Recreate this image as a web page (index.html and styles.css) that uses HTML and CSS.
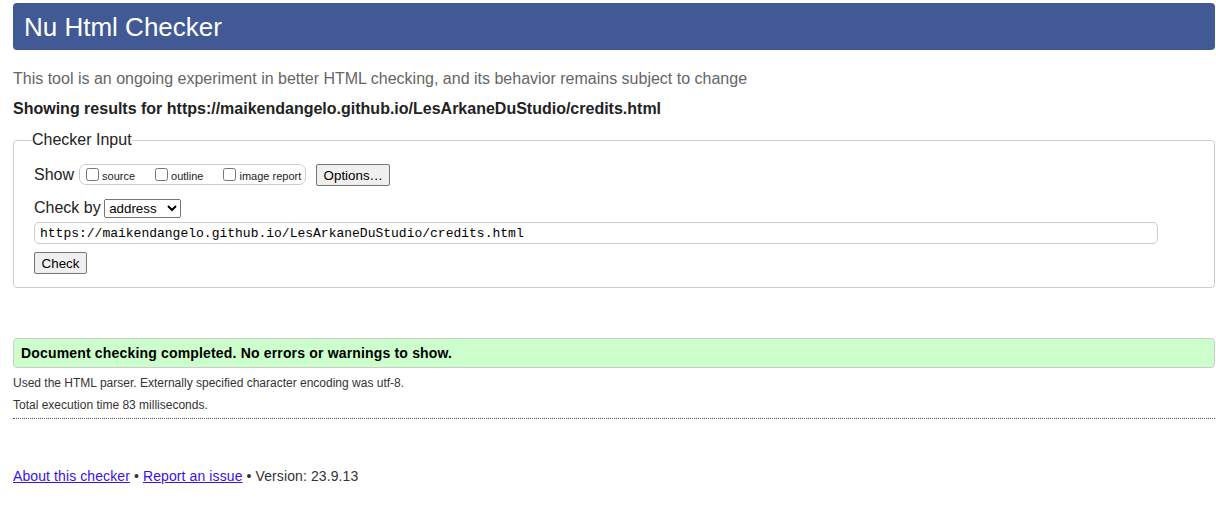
FILE: index.html
```html
<!DOCTYPE html>
<html lang="en">
<head>
<meta charset="utf-8">
<title>Nu Html Checker</title>
<link rel="stylesheet" href="styles.css">
</head>
<body>
<h1 class="title">Nu Html Checker</h1>
<p class="intro">This tool is an ongoing experiment in better HTML checking, and its behavior remains subject to change</p>
<p class="results">Showing results for https://maikendangelo.github.io/LesArkaneDuStudio/credits.html</p>
<form class="checker">
  <fieldset class="checker-box">
    <legend class="checker-legend">Checker Input</legend>
    <div class="show-row">
      <span class="show-label">Show</span>
      <span class="show-options">
        <label class="opt"><input type="checkbox" class="cb"><span>source</span></label>
        <label class="opt"><input type="checkbox" class="cb"><span>outline</span></label>
        <label class="opt last"><input type="checkbox" class="cb"><span>image report</span></label>
      </span>
      <button type="button" class="btn options-btn">Options…</button>
    </div>
    <div class="checkby-row">Check by <select class="sel"><option>address</option></select></div>
    <input type="text" class="url" value="https://maikendangelo.github.io/LesArkaneDuStudio/credits.html">
    <div class="submit-row"><button type="button" class="btn check-btn">Check</button></div>
  </fieldset>
</form>
<div class="success">Document checking completed. No errors or warnings to show.</div>
<div class="details">
  <p class="detail">Used the HTML parser. Externally specified character encoding was utf-8.</p>
  <p class="detail">Total execution time 83 milliseconds.</p>
</div>
<p class="footer"><a href="#" class="link">About this checker</a> • <a href="#" class="link">Report an issue</a> • Version: 23.9.13</p>
</body>
</html>
```
FILE: styles.css
```css
html, body {
  background: #ffffff;
}
body {
  margin: 0;
  padding: 3px 1px 0 13px;
  font-family: "Liberation Sans", Arial, sans-serif;
  color: #222222;
}
.title {
  margin: 0;
  height: 45px;
  line-height: 45px;
  padding: 2px 0 0 11px;
  background: #415a96;
  color: #ffffff;
  font-size: 26px;
  font-weight: normal;
  border-radius: 4px;
}
.intro {
  margin: 20px 0 0;
  font-size: 16px;
  line-height: 18px;
  color: #666666;
}
.results {
  margin: 12px 0 0;
  font-size: 16px;
  line-height: 18px;
  font-weight: bold;
  color: #222222;
}
.checker {
  margin: 13px 0 0;
}
.checker-box {
  margin: 0;
  padding: 15px 20px 13px;
  border: 1px solid #cccccc;
  border-radius: 4px;
  min-width: 0;
}
.checker-legend {
  padding: 0;
  margin-left: -2px;
  font-size: 16px;
  line-height: 18px;
  color: #222222;
}
.show-row {
  display: flex;
  align-items: flex-start;
  height: 22px;
}
.show-label {
  font-size: 16px;
  line-height: 18px;
  margin-top: 2px;
  margin-right: 5px;
}
.show-options {
  display: flex;
  align-items: center;
  height: 19px;
  margin-top: 0;
  padding: 0 4px 0 5px;
  border: 1px solid #cccccc;
  border-radius: 7px;
  font-size: 11px;
}
.opt {
  display: flex;
  align-items: center;
  margin-right: 19px;
}
.opt.last {
  margin-right: 0;
}
.opt span {
  margin-top: 3px;
}
.cb {
  width: 13px;
  height: 13px;
  margin: 0 3px 0 1px;
}
.btn {
  font-family: "Liberation Sans", Arial, sans-serif;
  font-size: 13.3333px;
  color: #000000;
  background: #efefef;
  border: 1px solid #767676;
  border-radius: 2px;
  padding: 0 6px;
  height: 22px;
}
.options-btn {
  margin-left: 10px;
  width: 74px;
}
.checkby-row {
  margin-top: 12px;
  font-size: 16px;
  line-height: 19px;
  height: 20px;
}
.sel {
  font-family: "Liberation Sans", Arial, sans-serif;
  font-size: 13.3333px;
  width: 77px;
  height: 19px;
  margin-left: -1px;
  vertical-align: baseline;
}
.url {
  display: block;
  box-sizing: border-box;
  margin-top: 4px;
  width: calc(100% - 36px);
  height: 22px;
  padding: 0 5px;
  border: 1px solid #cccccc;
  border-radius: 5px;
  font-family: "Liberation Mono", "DejaVu Sans Mono", monospace;
  font-size: 13px;
  color: #000000;
}
.submit-row {
  margin-top: 8px;
  height: 22px;
}
.check-btn {
  width: 53px;
}
.success {
  margin-top: 50px;
  height: 28px;
  line-height: 28px;
  padding: 0 7px;
  background: #ccffcc;
  border: 1px solid #cccccc;
  border-radius: 4px;
  font-size: 14px;
  font-weight: bold;
  letter-spacing: 0.17px;
  color: #000000;
}
.details {
  margin-top: 4px;
  padding-bottom: 2px;
  border-bottom: 1px dotted #555555;
}
.detail {
  margin: 0;
  font-size: 12px;
  line-height: 22px;
  color: #333333;
}
.footer {
  margin: 49px 0 0;
  font-size: 14px;
  line-height: 16px;
  letter-spacing: 0.1px;
  color: #333333;
}
.link {
  color: #3a0fe8;
}
```
